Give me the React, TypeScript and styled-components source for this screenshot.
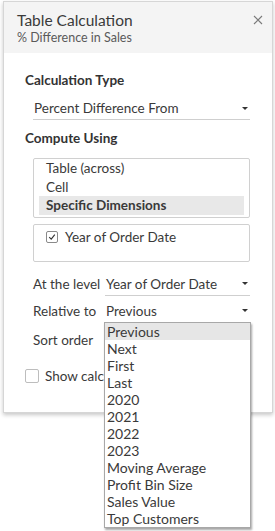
import styled, { createGlobalStyle } from "styled-components";

const GlobalStyle = createGlobalStyle`
    body {
        margin: 0;
        background: #ffffff;
        font-family: Lato, "Open Sans", sans-serif;
        color: #333333;
    }
`;

const Page = styled.div`
    min-height: 531px;
    overflow: hidden;
    padding-top: 1px;
    box-sizing: border-box;
`;

const Panel = styled.div`
    position: relative;
    width: 268px;
    height: 410px;
    margin-left: 3px;
    border: 1px solid #d6d6d6;
    background: #ffffff;
    box-shadow: 0 2px 4px rgba(0, 0, 0, 0.22);
`;

const Header = styled.div`
    display: flex;
    justify-content: space-between;
    height: 51px;
    padding: 9px 9px 0 13px;
    box-sizing: border-box;
    background: #f4f4f4;
`;

const Title = styled.div`
    font-size: 15.5px;
    line-height: 18px;
    color: #3a3a3a;
`;

const Subtitle = styled.div`
    font-size: 12.5px;
    line-height: 18px;
    color: #5a5a5a;
`;

const Close = styled.svg`
    margin-top: 4px;
`;

const Body = styled.div`
    padding: 0 22px 0 21px;
`;

const SectionLabel = styled.div<{ $top: number }>`
    margin-top: ${(p) => p.$top}px;
    font-size: 13.5px;
    font-weight: bold;
    line-height: 18px;
    color: #333333;
`;

const Select = styled.div<{ $indent?: number; $top?: number }>`
    position: relative;
    display: flex;
    justify-content: space-between;
    align-items: center;
    height: 22px;
    margin: ${(p) => p.$top ?? 0}px 0 0 ${(p) => p.$indent ?? 0}px;
    padding-left: 1px;
    border-bottom: 1px solid #cfcfcf;
    font-size: 13.5px;
    color: #3a3a3a;
`;

const Caret = styled.span`
    width: 0;
    height: 0;
    margin-right: 2px;
    border-left: 3px solid transparent;
    border-right: 3px solid transparent;
    border-top: 3px solid #333333;
`;

const ListBox = styled.div`
    margin: 11px 0 0 8px;
    padding: 0 5px 2px;
    border: 1px solid #d0d0d0;
    border-radius: 2px;
`;

const ListItem = styled.div<{ $selected?: boolean }>`
    padding-left: 7px;
    font-size: 13.5px;
    line-height: 18.5px;
    font-weight: ${(p) => (p.$selected ? "bold" : "normal")};
    background: ${(p) => (p.$selected ? "#e8e8e8" : "transparent")};
    color: #3a3a3a;
`;

const DimBox = styled.div`
    height: 38px;
    margin: 6px 0 0 8px;
    padding: 4px 0 0 12px;
    box-sizing: border-box;
    border: 1px solid #d0d0d0;
    border-radius: 2px;
`;

const CheckRow = styled.label`
    display: flex;
    align-items: center;
    gap: 7px;
    font-size: 13.5px;
    color: #3a3a3a;
`;

const Box = styled.span`
    display: inline-flex;
    align-items: center;
    justify-content: center;
    flex: none;
    width: 10px;
    height: 10px;
    border: 1px solid #8a8a8a;
    border-radius: 2px;
    background: #ffffff;
`;

const Field = styled.div<{ $top: number }>`
    display: grid;
    grid-template-columns: 72px 1fr;
    align-items: center;
    margin: ${(p) => p.$top}px 0 0 8px;
    font-size: 13.5px;
    color: #3a3a3a;
`;

const FieldLabel = styled.span`
    line-height: 22px;
`;

const Popup = styled.div`
    position: absolute;
    top: 22px;
    left: -1px;
    width: 145px;
    z-index: 2;
    border: 1px solid #a8a8a8;
    background: #ffffff;
    box-shadow: 1px 2px 2px rgba(0, 0, 0, 0.35);
`;

const Option = styled.div<{ $active?: boolean }>`
    padding-left: 2px;
    font-size: 14px;
    line-height: 17px;
    color: #3a3a3a;
    background: ${(p) => (p.$active ? "#e6e6e6" : "transparent")};
`;

const ShowRow = styled(CheckRow)`
    margin-top: 16px;
    gap: 6px;
`;

const ShowBox = styled(Box)`
    width: 12px;
    height: 12px;
    border-color: #bdbdbd;
`;

const Clipped = styled.span`
    width: 59px;
    overflow: hidden;
    white-space: nowrap;
`;

const options = [
    "Previous",
    "Next",
    "First",
    "Last",
    "2020",
    "2021",
    "2022",
    "2023",
    "Moving Average",
    "Profit Bin Size",
    "Sales Value",
    "Top Customers",
];

export default function App() {
    return (
        <Page>
            <GlobalStyle />
            <Panel>
                <Header>
                    <div>
                        <Title>Table Calculation</Title>
                        <Subtitle>% Difference in Sales</Subtitle>
                    </div>
                    <Close width="10" height="10" viewBox="0 0 10 10">
                        <path d="M1 1 L9 9 M9 1 L1 9" stroke="#7a7a7a" strokeWidth="1.1" />
                    </Close>
                </Header>
                <Body>
                    <SectionLabel $top={18}>Calculation Type</SectionLabel>
                    <Select $indent={8} $top={8}>
                        Percent Difference From
                        <Caret />
                    </Select>
                    <SectionLabel $top={9}>Compute Using</SectionLabel>
                    <ListBox>
                        <ListItem>Table (across)</ListItem>
                        <ListItem>Cell</ListItem>
                        <ListItem $selected>Specific Dimensions</ListItem>
                    </ListBox>
                    <DimBox>
                        <CheckRow>
                            <Box>
                                <svg width="8" height="8" viewBox="0 0 8 8">
                                    <path d="M1.2 4.2 L3.2 6.2 L6.8 1.6" fill="none" stroke="#333" strokeWidth="1.1" />
                                </svg>
                            </Box>
                            Year of Order Date
                        </CheckRow>
                    </DimBox>
                    <Field $top={11}>
                        <FieldLabel>At the level</FieldLabel>
                        <Select>
                            Year of Order Date
                            <Caret />
                        </Select>
                    </Field>
                    <Field $top={4}>
                        <FieldLabel>Relative to</FieldLabel>
                        <Select>
                            Previous
                            <Caret />
                            <Popup>
                                {options.map((o, i) => (
                                    <Option key={o} $active={i === 0}>
                                        {o}
                                    </Option>
                                ))}
                            </Popup>
                        </Select>
                    </Field>
                    <Field $top={6}>
                        <FieldLabel>Sort order</FieldLabel>
                        <Select />
                    </Field>
                    <ShowRow>
                        <ShowBox />
                        <Clipped>Show calculation assistance</Clipped>
                    </ShowRow>
                </Body>
            </Panel>
        </Page>
    );
}
